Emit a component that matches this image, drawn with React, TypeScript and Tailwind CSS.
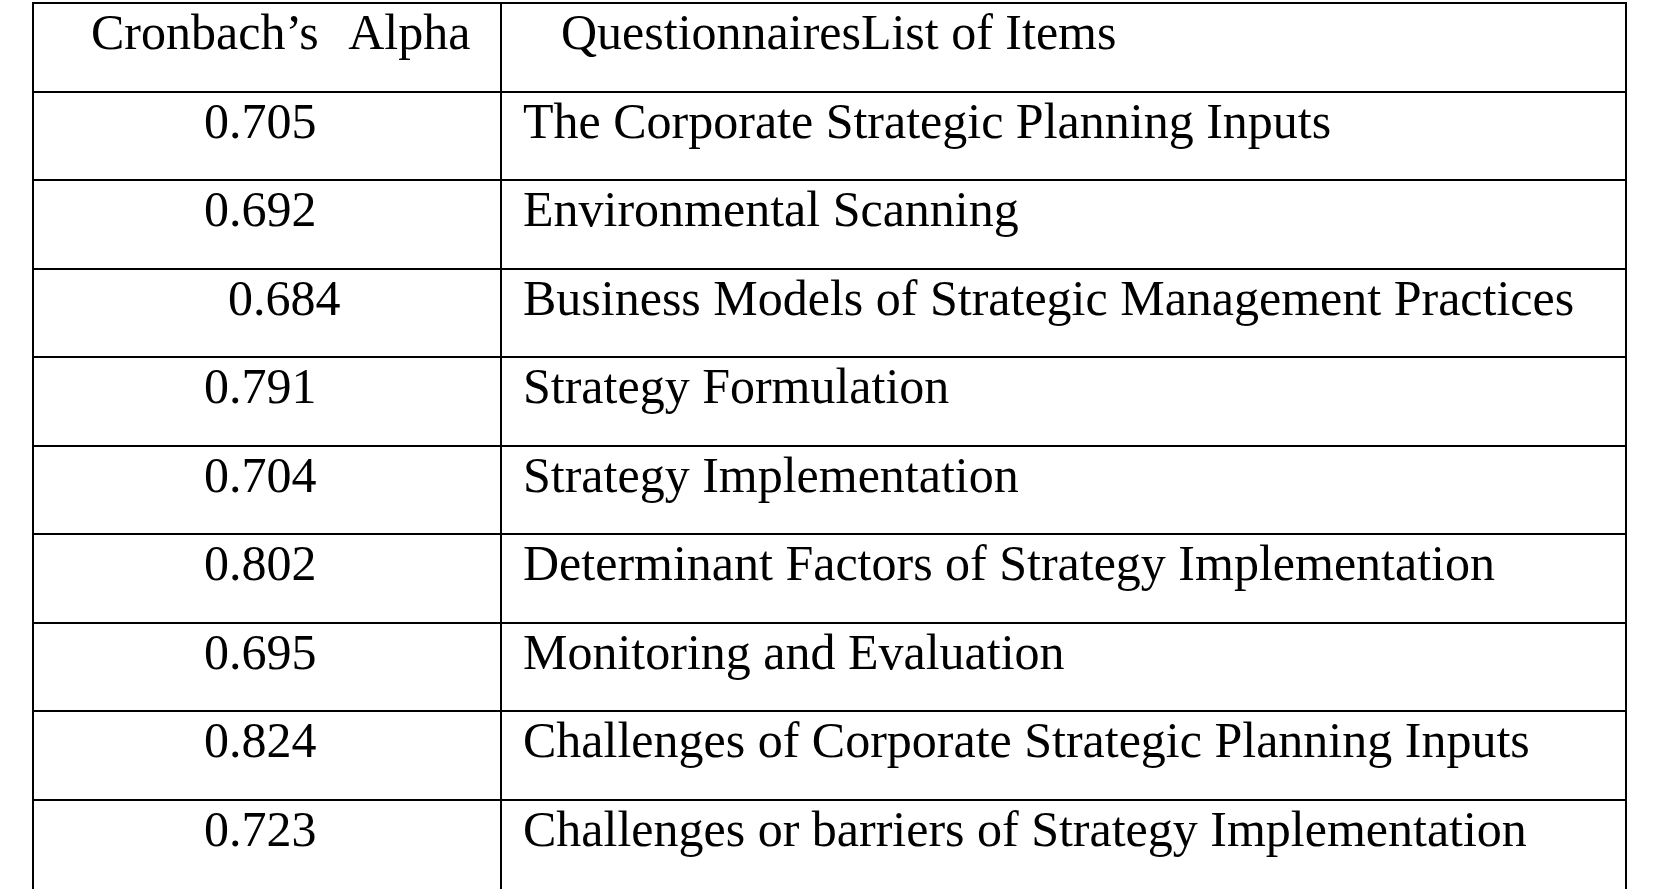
import React from 'react';

type Row = {
  alpha: string;
  item: string;
  // extra indent for values that sit off the usual column position
  alphaPad?: string;
};

const rows: Row[] = [
  { alpha: '0.705', item: 'The Corporate Strategic Planning Inputs' },
  { alpha: '0.692', item: 'Environmental Scanning' },
  { alpha: '0.684', item: 'Business Models of Strategic Management Practices', alphaPad: 'pl-[194px]' },
  { alpha: '0.791', item: 'Strategy Formulation' },
  { alpha: '0.704', item: 'Strategy Implementation' },
  { alpha: '0.802', item: 'Determinant Factors of Strategy Implementation' },
  { alpha: '0.695', item: 'Monitoring and Evaluation' },
  { alpha: '0.824', item: 'Challenges of Corporate Strategic Planning Inputs' },
  { alpha: '0.723', item: 'Challenges or barriers of Strategy Implementation' },
];

export default function App() {
  return (
    <div
      className="h-screen overflow-hidden bg-white pt-[2px] text-black"
      style={{ fontFamily: '"Liberation Serif", "Times New Roman", serif' }}
    >
      <div className="ml-[32px] w-[1595px] border-x-2 border-t-2 border-black text-[50px] leading-none">
        {/* Header */}
        <div className="flex h-[88.5px] border-b-2 border-black">
          <div className="w-[468px] shrink-0 border-r-2 border-black pl-[57px] pt-[3px] whitespace-pre">
            Cronbach’s <span className="ml-[17px]">Alpha</span>
          </div>
          <div className="flex-1 pl-[59px] pt-[3px]">QuestionnairesList of Items</div>
        </div>

        {rows.map((row, i) => {
          const last = i === rows.length - 1;
          return (
            <div
              key={row.alpha}
              className={
                last
                  ? 'flex h-[120px]'
                  : 'flex h-[88.5px] border-b-2 border-black'
              }
            >
              <div
                className={`w-[468px] shrink-0 border-r-2 border-black pt-[3px] ${
                  row.alphaPad ?? 'pl-[170px]'
                }`}
              >
                {row.alpha}
              </div>
              <div className="flex-1 pl-[21px] pt-[3px] whitespace-nowrap">{row.item}</div>
            </div>
          );
        })}
      </div>
    </div>
  );
}
